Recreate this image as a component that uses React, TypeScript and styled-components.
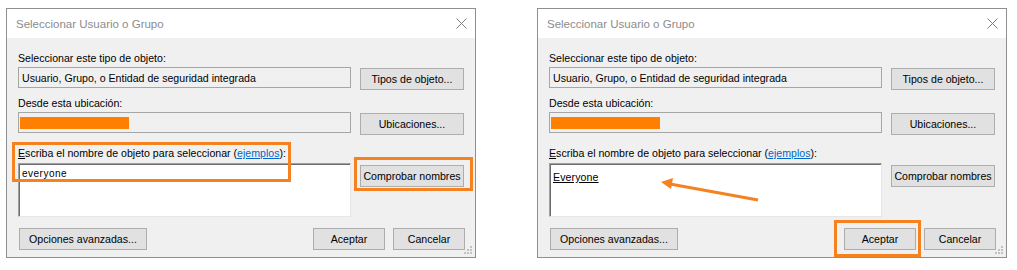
import React from "react";
import styled, { createGlobalStyle } from "styled-components";

const GlobalStyle = createGlobalStyle`
  body {
    margin: 0;
    background: #ffffff;
    font-family: "Liberation Sans", Arial, sans-serif;
  }
`;

const orange = "#f5821f";

const Page = styled.div`
  display: flex;
  gap: 61px;
  padding: 8px 0 0 6px;
`;

const Dialog = styled.div`
  position: relative;
  width: 470px;
  height: 250px;
  box-sizing: border-box;
  border: 1px solid #8f8f8f;
  background: #f0f0f0;
  display: flex;
  flex-direction: column;
  font-size: 10.6px;
  color: #000;
`;

const TitleBar = styled.div`
  height: 29px;
  background: #fff;
  display: flex;
  align-items: center;
  justify-content: space-between;
  padding: 0 8px 0 9px;
  color: #8c8c8c;
  font-size: 11.5px;
`;

const Body = styled.div`
  padding: 12px 10px 0 11px;
  display: flex;
  flex-direction: column;
`;

const Label = styled.div<{ $top: number }>`
  line-height: 16px;
  height: 16px;
  margin-top: ${(p) => p.$top}px;
  white-space: nowrap;
`;

const Row = styled.div<{ $top: number }>`
  display: grid;
  grid-template-columns: 333px 104px;
  column-gap: 9px;
  align-items: start;
  margin-top: ${(p) => p.$top}px;
`;

const Field = styled.div`
  height: 21px;
  box-sizing: border-box;
  border: 1px solid #a6a6a6;
  background: #f0f0f0;
  padding: 0 3px;
  display: flex;
  align-items: center;
  white-space: nowrap;
`;

const Redacted = styled.div`
  width: 109px;
  height: 12px;
  background: #ff8000;
  margin-left: -2px;
`;

const TextArea = styled.div`
  height: 54px;
  box-sizing: border-box;
  background: #fff;
  border: 1px solid;
  border-color: #a0a0a0 #e6e6e6 #e6e6e6 #a0a0a0;
  box-shadow: inset 1px 1px 0 #6d6d6d;
  padding: 3px 3px;
`;

const Entry = styled.span<{ $resolved?: boolean }>`
  font-size: ${(p) => (p.$resolved ? "10.6px" : "10px")};
  letter-spacing: ${(p) => (p.$resolved ? "0.1px" : "0.5px")};
  text-decoration: ${(p) => (p.$resolved ? "underline" : "none")};
  line-height: ${(p) => (p.$resolved ? "20px" : "13px")};
`;

const Button = styled.button<{ $w?: number; $top?: number }>`
  font-family: "Liberation Sans", Arial, sans-serif;
  font-size: 10.6px;
  color: #000;
  width: ${(p) => (p.$w ? `${p.$w}px` : "100%")};
  height: 22px;
  margin-top: ${(p) => p.$top ?? 0}px;
  box-sizing: border-box;
  background: #e1e1e1;
  border: 1px solid #adadad;
  padding: 0;
  white-space: nowrap;
`;

const Footer = styled.div`
  display: flex;
  gap: 8px;
  margin-top: 11px;
  padding-left: 1px;
`;

const Spacer = styled.div`
  flex: 1;
`;

const Link = styled.span`
  color: #0066cc;
  text-decoration: underline;
`;

const Key = styled.span`
  text-decoration: underline;
`;

const Highlight = styled.div<{ $l: number; $t: number; $w: number; $h: number }>`
  position: absolute;
  left: ${(p) => p.$l}px;
  top: ${(p) => p.$t}px;
  width: ${(p) => p.$w}px;
  height: ${(p) => p.$h}px;
  box-sizing: border-box;
  border: 3px solid ${orange};
  pointer-events: none;
`;

const Overlay = styled.svg`
  position: absolute;
  left: 0;
  top: 0;
  pointer-events: none;
`;

const Grip = styled.svg`
  position: absolute;
  right: 2px;
  bottom: 2px;
`;

function CloseIcon() {
  return (
    <svg width="11" height="11" viewBox="0 0 11 11">
      <path d="M0.5 0.5 L10.5 10.5 M10.5 0.5 L0.5 10.5" stroke="#7d7d7d" strokeWidth="1" />
    </svg>
  );
}

function SizeGrip() {
  const dots = [
    [7, 1],
    [4, 4],
    [7, 4],
    [1, 7],
    [4, 7],
    [7, 7],
  ];
  return (
    <Grip width="10" height="10" viewBox="0 0 10 10">
      {dots.map(([x, y]) => (
        <rect key={`${x}-${y}`} x={x} y={y} width="2" height="2" fill="#c2c2c2" />
      ))}
    </Grip>
  );
}

type DialogProps = {
  entry: React.ReactNode;
  children?: React.ReactNode;
};

function SelectDialog({ entry, children }: DialogProps) {
  return (
    <Dialog>
      <TitleBar>
        <span>Seleccionar Usuario o Grupo</span>
        <CloseIcon />
      </TitleBar>
      <Body>
        <Label $top={0}>Seleccionar este tipo de objeto:</Label>
        <Row $top={1}>
          <Field>Usuario, Grupo, o Entidad de seguridad integrada</Field>
          <Button $top={1}>Tipos de objeto...</Button>
        </Row>
        <Label $top={5}>Desde esta ubicación:</Label>
        <Row $top={1}>
          <Field>
            <Redacted />
          </Field>
          <Button $top={1}>Ubicaciones...</Button>
        </Row>
        <Label $top={10}>
          <Key>E</Key>scriba el nombre de objeto para seleccionar (<Link>ejemplos</Link>):
        </Label>
        <Row $top={2}>
          <TextArea>{entry}</TextArea>
          <Button $top={2}>Comprobar nombres</Button>
        </Row>
        <Footer>
          <Button $w={128}>Opciones avanzadas...</Button>
          <Spacer />
          <Button $w={72}>Aceptar</Button>
          <Button $w={72}>Cancelar</Button>
        </Footer>
      </Body>
      <SizeGrip />
      {children}
    </Dialog>
  );
}

export default function App() {
  return (
    <>
      <GlobalStyle />
      <Page>
        <SelectDialog entry={<Entry>everyone</Entry>}>
          <Highlight $l={5} $t={133} $w={279} $h={40} />
          <Highlight $l={347} $t={148} $w={119} $h={34} />
        </SelectDialog>
        <SelectDialog entry={<Entry $resolved>Everyone</Entry>}>
          <Highlight $l={296} $t={211} $w={87} $h={37} />
          <Overlay width="470" height="250">
            <line x1="220" y1="191" x2="132" y2="175" stroke={orange} strokeWidth="3" />
            <path d="M123 173 L135 169 L133 180 Z" fill={orange} />
          </Overlay>
        </SelectDialog>
      </Page>
    </>
  );
}
